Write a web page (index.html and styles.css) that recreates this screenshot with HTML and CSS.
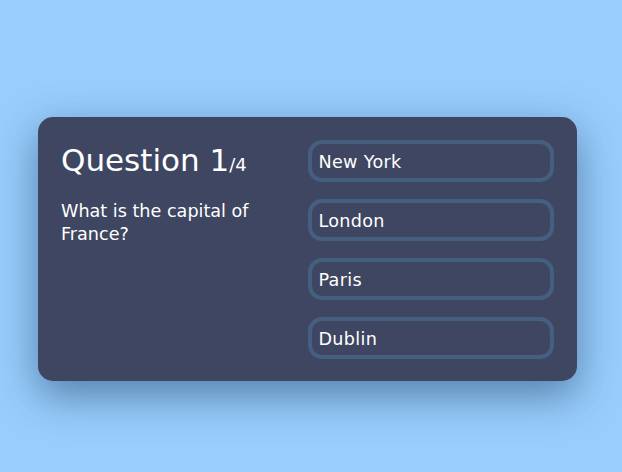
FILE: index.html
```html
<!DOCTYPE html>
<html>
<head>
<meta charset="utf-8">
<link rel="stylesheet" href="styles.css">
</head>
<body>
<div class="stage">
  <div class="card">
    <div class="question">
      <h1 class="title">Question 1<span class="total">/4</span></h1>
      <p class="text">What is the capital of France?</p>
    </div>
    <div class="answers">
      <button class="answer">New York</button>
      <button class="answer">London</button>
      <button class="answer">Paris</button>
      <button class="answer">Dublin</button>
    </div>
  </div>
</div>
</body>
</html>
```

FILE: styles.css
```css
html, body {
  margin: 0;
  padding: 0;
  height: 100%;
}
body {
  background: #98cdfc;
  font-family: "DejaVu Sans", Verdana, sans-serif;
  color: #fff;
}
.stage {
  height: 100%;
  box-sizing: border-box;
  display: flex;
  align-items: center;
  justify-content: center;
  padding: 26px 7px 0 0;
}
.card {
  width: 539px;
  height: 264px;
  box-sizing: border-box;
  padding: 23px;
  background: #3e4661;
  border-radius: 15px;
  box-shadow: 0 14px 40px rgba(20, 50, 90, 0.5);
  display: grid;
  grid-template-columns: 1fr 1fr;
}
.title {
  margin: 0 0 17px 0;
  padding-top: 2px;
  font-size: 31px;
  font-weight: normal;
  line-height: 36px;
}
.total {
  font-size: 18px;
}
.text {
  margin: 0;
  font-size: 17.6px;
  line-height: 23px;
  padding-right: 20px;
}
.answers {
  display: flex;
  flex-direction: column;
  gap: 17px;
}
.answer {
  height: 42px;
  box-sizing: border-box;
  border: 4px solid #455f81;
  border-radius: 14px;
  background: #3e4661;
  color: #fff;
  font-family: "DejaVu Sans", Verdana, sans-serif;
  font-size: 17.6px;
  letter-spacing: 0.3px;
  text-align: left;
  padding: 1px 7px 0;
}
```
